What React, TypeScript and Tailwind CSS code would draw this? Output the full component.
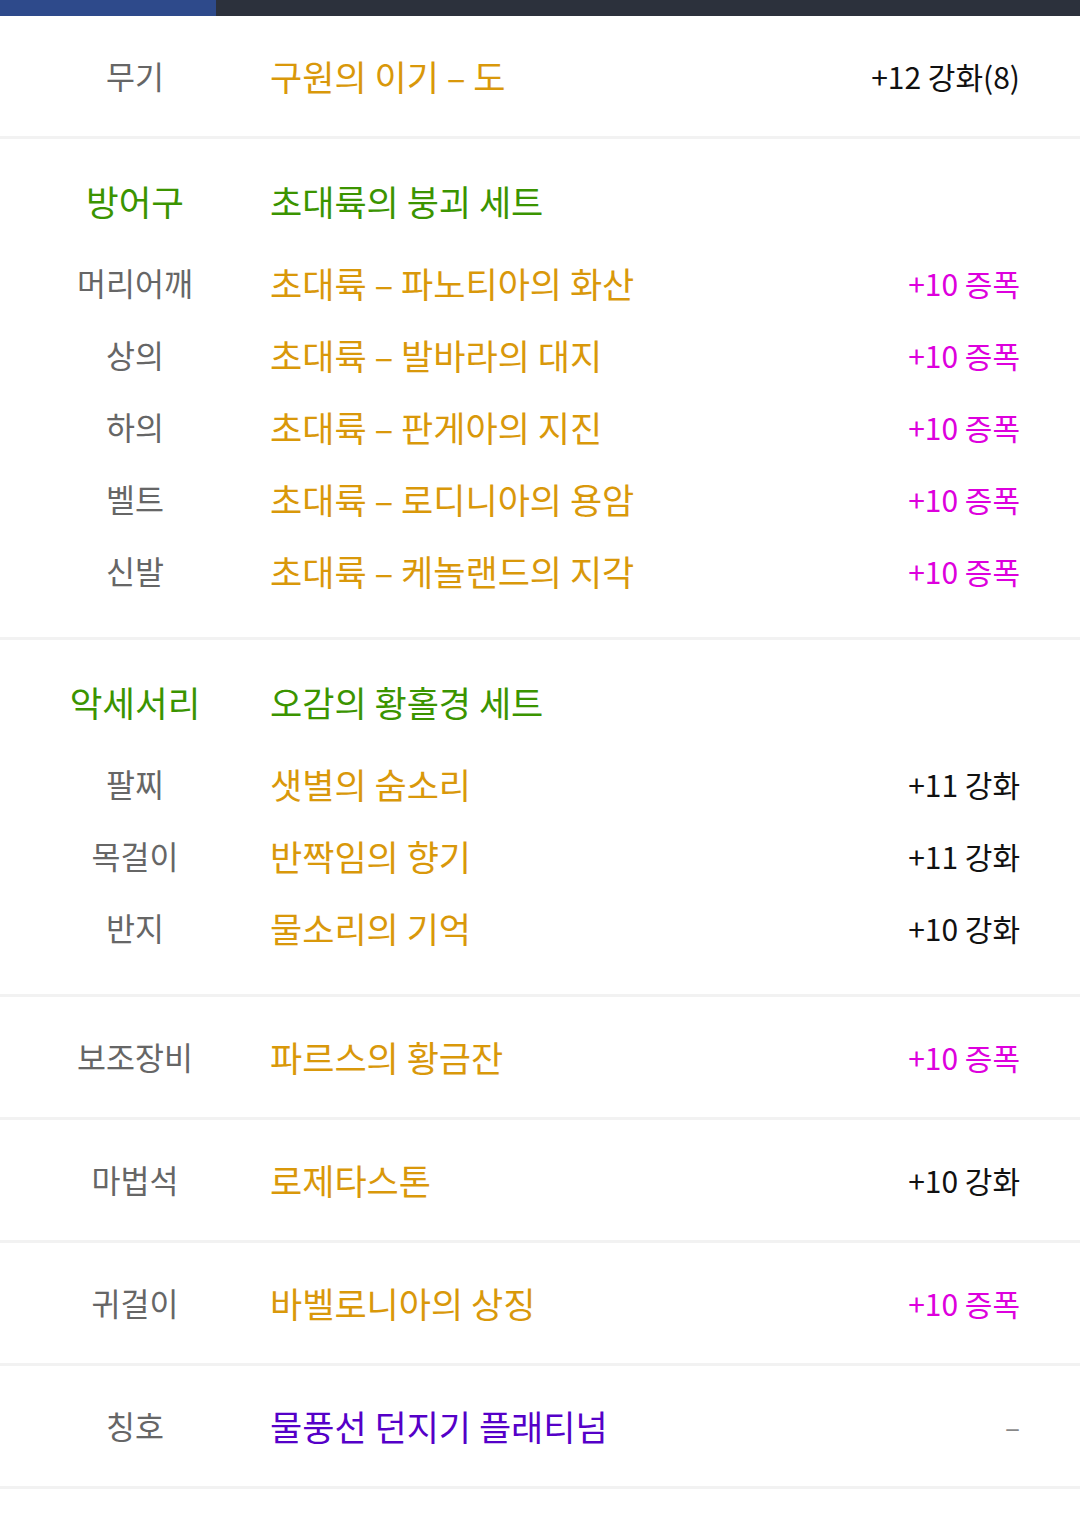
import React from "react";

type Row = { label: string; name: string; value: string; kind: "enh" | "amp" | "none" };

const font = { fontFamily: '"Noto Sans CJK KR", "Noto Sans", Roboto, sans-serif' };

function Value({ value, kind }: { value: string; kind: Row["kind"] }) {
  if (kind === "none") return <span className="text-[28px] text-[#888]">–</span>;
  return (
    <span className={kind === "amp" ? "text-[#dd00dd] text-[30px]" : "text-[#111] text-[30px]"}>{value}</span>
  );
}

function ItemRow({ r, nameColor = "text-[#d9980a]" }: { r: Row; nameColor?: string }) {
  return (
    <div className="flex h-[72px] items-center">
      <div className="w-[270px] text-center text-[31.5px] text-[#666]">{r.label}</div>
      <div className={`flex-1 text-[35px] ${nameColor}`}>{r.name}</div>
      <div className="pr-[60px] text-right">
        <Value value={r.value} kind={r.kind} />
      </div>
    </div>
  );
}

function Single({ r, nameColor }: { r: Row; nameColor?: string }) {
  return (
    <div className="flex h-[123px] items-center border-b-[3px] border-[#f2f2f2]">
      <div className="w-full">
        <ItemRow r={r} nameColor={nameColor} />
      </div>
    </div>
  );
}

function SetSection({ label, setName, rows }: { label: string; setName: string; rows: Row[] }) {
  return (
    <div className="border-b-[3px] border-[#f2f2f2] pt-[26px] pb-[30px]">
      <div className="mb-[10px] flex h-[72px] items-center">
        <div className="w-[270px] text-center text-[35.5px] text-[#3b9400]">{label}</div>
        <div className="flex-1 text-[35px] text-[#3b9400]">{setName}</div>
      </div>
      {rows.map((r) => (
        <ItemRow key={r.label} r={r} />
      ))}
    </div>
  );
}

export default function App() {
  const armor: Row[] = [
    { label: "머리어깨", name: "초대륙 – 파노티아의 화산", value: "+10 증폭", kind: "amp" },
    { label: "상의", name: "초대륙 – 발바라의 대지", value: "+10 증폭", kind: "amp" },
    { label: "하의", name: "초대륙 – 판게아의 지진", value: "+10 증폭", kind: "amp" },
    { label: "벨트", name: "초대륙 – 로디니아의 용암", value: "+10 증폭", kind: "amp" },
    { label: "신발", name: "초대륙 – 케놀랜드의 지각", value: "+10 증폭", kind: "amp" },
  ];
  const acc: Row[] = [
    { label: "팔찌", name: "샛별의 숨소리", value: "+11 강화", kind: "enh" },
    { label: "목걸이", name: "반짝임의 향기", value: "+11 강화", kind: "enh" },
    { label: "반지", name: "물소리의 기억", value: "+10 강화", kind: "enh" },
  ];
  return (
    <div className="min-h-[1526px] w-[1080px] bg-white" style={font}>
      <div className="flex h-[16px]">
        <div className="w-[216px] bg-[#2e4a8b]" />
        <div className="flex-1 bg-[#2c313c]" />
      </div>
      <div className="flex h-[123px] items-center border-b-[3px] border-[#f2f2f2]">
        <div className="w-full">
          <ItemRow r={{ label: "무기", name: "구원의 이기 – 도", value: "+12 강화(8)", kind: "enh" }} />
        </div>
      </div>
      <SetSection label="방어구" setName="초대륙의 붕괴 세트" rows={armor} />
      <SetSection label="악세서리" setName="오감의 황홀경 세트" rows={acc} />
      <Single r={{ label: "보조장비", name: "파르스의 황금잔", value: "+10 증폭", kind: "amp" }} />
      <Single r={{ label: "마법석", name: "로제타스톤", value: "+10 강화", kind: "enh" }} />
      <Single r={{ label: "귀걸이", name: "바벨로니아의 상징", value: "+10 증폭", kind: "amp" }} />
      <Single r={{ label: "칭호", name: "물풍선 던지기 플래티넘", value: "-", kind: "none" }} nameColor="text-[#5500c8]" />
    </div>
  );
}
